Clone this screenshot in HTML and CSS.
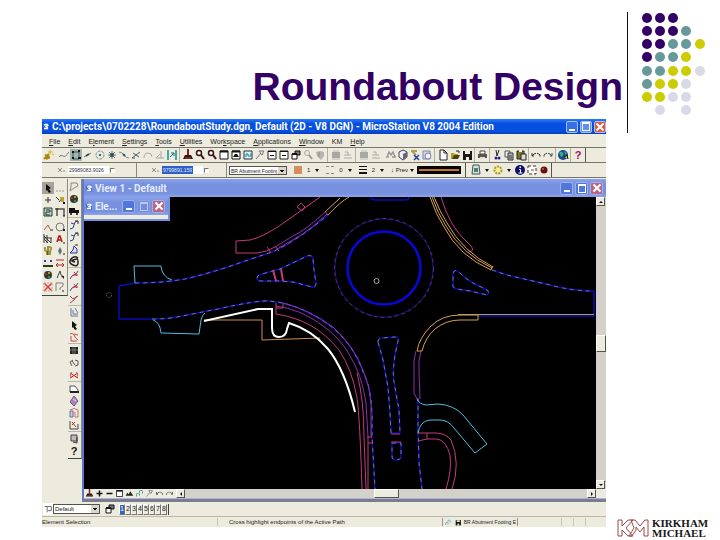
FILE: index.html
```
<!DOCTYPE html>
<html lang="en">
<head>
    <meta charset="UTF-8">
    <meta name="viewport" content="width=device-width, initial-scale=1.0">
    <title>Roundabout Design</title>
    <link rel="stylesheet" href="styles.css">
</head>
<body>
    <!-- Icon set -->
    <svg class="defs" aria-hidden="true">
        <symbol id="app" viewBox="0 0 12 12"><path d="M1 2h7l2 2v7H3z" fill="#3a66c8"/><path d="M3 4q4-3 6 0l-4 2q4 0 3 3H3" fill="none" stroke="#fff" stroke-width="2"/></symbol>
        <symbol id="key" viewBox="0 0 12 12"><path d="M1 10l5-5M3 10l4-2M2 6l4 1" stroke="#a98a10" stroke-width="2"/><path d="M7 1v5M5 3h5M9 5l2 1" stroke="#d6b820"/></symbol>
        <symbol id="wave" viewBox="0 0 12 12"><path d="M1 8q2-3 4-1t6-4" fill="none" stroke="#6c7f8c"/></symbol>
        <symbol id="grid" viewBox="0 0 12 12"><path d="M0 0h12v12H0z" fill="#a9b3ad"/><path d="M3 3h6v7H3z" fill="none" stroke="#286466"/><path d="M2 3h2M8 9h3M2 9h2M8 2h2" stroke="#111" stroke-width="2"/></symbol>
        <symbol id="slant" viewBox="0 0 12 12"><path d="M2 8l7-4" stroke="#6f7e88"/><path d="M4 7l3-2" stroke="#344f5c" stroke-width="2"/></symbol>
        <symbol id="target" viewBox="0 0 12 12"><circle cx="6" cy="6" r="4" fill="none" stroke="#7c8d94" stroke-dasharray="3 1"/><path d="M5 5h2v2H5z" fill="#356a78"/></symbol>
        <symbol id="mesh" viewBox="0 0 12 12"><path d="M3 3l6 6M9 3L3 9M6 2v8M2 6h8" stroke="#5b7076"/><circle cx="6" cy="6" r="2" fill="#3b5358"/></symbol>
        <symbol id="fall" viewBox="0 0 12 12"><path d="M1 3q3 0 5 3t5 3" fill="none" stroke="#75858c"/><path d="M5 5l2 2" stroke="#2f555f" stroke-width="2"/></symbol>
        <symbol id="cross" viewBox="0 0 12 12"><path d="M2 9l8-6M3 4l6 4M2 9h3" stroke="#4a5d64"/></symbol>
        <symbol id="arc" viewBox="0 0 12 12"><path d="M2 9q0-5 4-5t4 4" fill="none" stroke="#a3aaa6"/></symbol>
        <symbol id="perp" viewBox="0 0 12 12"><path d="M2 9h8M7 2v7M2 9l4-4" stroke="#a3aaa6"/></symbol>
        <symbol id="snap" viewBox="0 0 12 12"><path d="M3 2H2v8h1M9 2h1v8H9" fill="none" stroke="#3fa9a2" stroke-width="2"/><path d="M4 8l4-4M5 4h3v3" fill="none" stroke="#1c6b78"/></symbol>
        <symbol id="brush" viewBox="0 0 12 12"><path d="M6 0v6" stroke="#8a1d1d" stroke-width="2"/><path d="M3 6h6l2 4H1z" fill="#241818"/><path d="M3 9h6" stroke="#c33"/></symbol>
        <symbol id="zoomin" viewBox="0 0 12 12"><circle cx="5" cy="4" r="2.500" fill="#fff" stroke="#3b1313" stroke-width="1.500"/><path d="M7 6l3 4" stroke="#3b1010" stroke-width="2"/></symbol>
        <symbol id="zoomgray" viewBox="0 0 12 12"><circle cx="5" cy="4" r="2.500" fill="none" stroke="#aaa"/><path d="M7 6l3 4" stroke="#999" stroke-width="2"/></symbol>
        <symbol id="win" viewBox="0 0 12 12"><path d="M2 2h8v8H2z" fill="#fff" stroke="#111"/><path d="M2 2.500h8" stroke="#111" stroke-width="2"/></symbol>
        <symbol id="winfit" viewBox="0 0 12 12"><path d="M2 2h8v8H2z" fill="#fff" stroke="#111"/><path d="M2 2.500h8" stroke="#111" stroke-width="2"/><path d="M3 8l2-3h2l2 3z" fill="#111"/></symbol>
        <symbol id="winblue" viewBox="0 0 12 12"><path d="M2 2h8v8H2z" fill="#dff0f2" stroke="#234"/><path d="M4 8V5h2v2h3V4" fill="none" stroke="#20828c"/></symbol>
        <symbol id="wrench" viewBox="0 0 12 12"><path d="M2 10l5-6M5 2h5L8 6z" fill="#eee" stroke="#777"/></symbol>
        <symbol id="winarrow" viewBox="0 0 12 12"><path d="M2 2h8v8H2z" fill="#fff" stroke="#222"/><path d="M2 2.500h8M4 6.500h4" stroke="#111"/></symbol>
        <symbol id="copywin" viewBox="0 0 12 12"><path d="M5 2h5v4H5z" fill="#777" stroke="#111"/><path d="M2 5h5v5H2z" fill="#fff" stroke="#111"/><path d="M2 5h5" stroke="#111" stroke-width="2"/></symbol>
        <symbol id="shield" viewBox="0 0 12 12"><path d="M2 3l4-1 4 1v4l-3 4-4-4z" fill="#b5b5ae"/><path d="M5 3v5" stroke="#8c8c88"/></symbol>
        <symbol id="stamp" viewBox="0 0 12 12"><path d="M2 3h8v6H2z" fill="#a9a9a4"/><path d="M2 10h8M3 2h6" stroke="#bbb"/></symbol>
        <symbol id="lines" viewBox="0 0 12 12"><path d="M3 3h3v3M2 6h7M2 9h8" fill="none" stroke="#aaa"/></symbol>
        <symbol id="bino" viewBox="0 0 12 12"><path d="M2 8l2-5 2 3 2-3 2 5M1 8h3M7 8h4" fill="none" stroke="#999" stroke-width="1.500"/></symbol>
        <symbol id="cube" viewBox="0 0 12 12"><path d="M6 1l4 2v5l-4 3-4-3V3z" fill="#eef" stroke="#444"/><path d="M6 5l4-2v5l-4 3z" fill="#667"/></symbol>
        <symbol id="flag" viewBox="0 0 12 12"><path d="M2 2h6M3 2l4 4" stroke="#b59a52" stroke-width="2"/><path d="M5 6l5 5M10 6l-5 5" stroke="#2238b8" stroke-width="1.500"/></symbol>
        <symbol id="note" viewBox="0 0 12 12"><path d="M2 2h7v8H2z" fill="#cfd4e8" stroke="#8088b0"/><circle cx="7" cy="7" r="3" fill="#f2f2fa" stroke="#7780a8"/></symbol>
        <symbol id="page" viewBox="0 0 12 12"><path d="M3 1h4l3 3v7H3z" fill="#fff" stroke="#222"/><path d="M7 1v3h3" stroke="#222" fill="none"/></symbol>
        <symbol id="open" viewBox="0 0 12 12"><path d="M2 4h3l1 1h3v5H2z" fill="#b5a31c"/><path d="M3 10l2-4h6l-2 4z" fill="#45410d"/><path d="M7 2h3v2" stroke="#222" fill="none"/></symbol>
        <symbol id="save" viewBox="0 0 12 12"><path d="M2 2h9v9H2z" fill="#191919"/><path d="M4 2h5v3H4zM5 8h3v3H5z" fill="#ecebdd"/></symbol>
        <symbol id="print" viewBox="0 0 12 12"><path d="M4 2h5v3H4z" fill="#fff" stroke="#444"/><path d="M2 5h9v4H2z" fill="#56564e"/><path d="M4 8h5v2H4z" fill="#ddd"/></symbol>
        <symbol id="cut" viewBox="0 0 12 12"><path d="M5 1l1 6M8 1L6 7" stroke="#222"/><circle cx="5" cy="9" r="1.500" fill="#23239a"/><circle cx="8" cy="9" r="1.500" fill="#23239a"/></symbol>
        <symbol id="copy" viewBox="0 0 12 12"><path d="M2 2h5v6H2z" fill="#eee" stroke="#555"/><path d="M5 4h5v7H5z" fill="#bbb" stroke="#333"/><path d="M6 7h3M6 9h3" stroke="#333"/></symbol>
        <symbol id="paste" viewBox="0 0 12 12"><path d="M2 2h7v8H2z" fill="#7c7520" stroke="#222"/><path d="M6 5h5v6H6z" fill="#ddd" stroke="#222"/><path d="M4 1h3v2H4z" fill="#eee"/></symbol>
        <symbol id="undo" viewBox="0 0 12 12"><path d="M2 4v3h3M2 7q4-5 8-1v2" fill="none" stroke="#333" stroke-dasharray="5 1"/></symbol>
        <symbol id="redo" viewBox="0 0 12 12"><path d="M10 4v3H7M10 7q-4-5-8-1v2" fill="none" stroke="#444" stroke-dasharray="5 1"/></symbol>
        <symbol id="globe" viewBox="0 0 12 12"><circle cx="6" cy="6" r="5" fill="#154a8e"/><path d="M2 4q3-3 4 0t-2 4zM7 2l3 2-2 2z" fill="#3fa48c"/><path d="M7 8l3-2 1 4" fill="#c9a72c" stroke="#111"/></symbol>
        <symbol id="info" viewBox="0 0 12 12"><circle cx="6" cy="6" r="5" fill="#101070"/><path d="M5 5.500h1.500V9M4.500 9h4" stroke="#fff" fill="none"/><path d="M5.500 2.500h1.500v1.500H5.500z" fill="#fff"/></symbol>
        <symbol id="cells" viewBox="0 0 12 12"><path d="M2 2h8v8H2z" fill="#fff" stroke="#333" stroke-dasharray="3 2"/><path d="M5 6h3" stroke="#a33"/></symbol>
        <symbol id="ball" viewBox="0 0 12 12"><circle cx="6" cy="6" r="3.500" fill="#641212"/><circle cx="5" cy="5" r="1" fill="#c06060"/></symbol>
        <symbol id="layers" viewBox="0 0 12 12"><path d="M3 1h6l1 9H2z" fill="#d7e2d8" stroke="#455"/><path d="M4 4h4v4H4z" fill="#4d8078"/></symbol>
        <symbol id="gear" viewBox="0 0 12 12"><circle cx="6" cy="6" r="3.500" fill="#f5ee9c" stroke="#a89b22" stroke-width="2" stroke-dasharray="2 1"/></symbol>
        <symbol id="axis" viewBox="0 0 12 12"><path d="M3 4l4 4M7 4L3 8M8 7h2" stroke="#888"/></symbol>
        <symbol id="arrow" viewBox="0 0 12 12"><path d="M4 2l5 4-2 1 2 3-2 1-2-3-1 1z" fill="#111"/></symbol>
        <symbol id="fence" viewBox="0 0 12 12"><path d="M2 9h8" stroke="#999" stroke-dasharray="2 1"/></symbol>
        <symbol id="plus" viewBox="0 0 12 12"><path d="M6 3v6M3 6h6" stroke="#333"/></symbol>
        <symbol id="plusbold" viewBox="0 0 12 12"><path d="M6 2v8M2 6h8" stroke="#111" stroke-width="2"/></symbol>
        <symbol id="minus" viewBox="0 0 12 12"><path d="M2 6h8" stroke="#111" stroke-width="2"/></symbol>
        <symbol id="pen" viewBox="0 0 12 12"><path d="M2 3l3 3M5 8l4-5" stroke="#333"/><path d="M6 3h4v5H7z" fill="#b8a334"/><path d="M9 9h2" stroke="#111" stroke-width="2"/></symbol>
        <symbol id="hatch" viewBox="0 0 12 12"><path d="M2 2h8v8H2z" fill="#bfd0c5" stroke="#213f38"/><path d="M4 4h4v2H4v3h4" fill="none" stroke="#213f38"/></symbol>
        <symbol id="shape" viewBox="0 0 12 12"><path d="M3 10V3h7v7" fill="none" stroke="#57504c" stroke-width="1.500"/><path d="M1 3h3M9 10h2" stroke="#111"/></symbol>
        <symbol id="redline" viewBox="0 0 12 12"><path d="M2 9l4-5 2 4" fill="none" stroke="#ad5555"/><path d="M8 9h3" stroke="#222"/></symbol>
        <symbol id="ellipse" viewBox="0 0 12 12"><circle cx="6" cy="6" r="4" fill="none" stroke="#777"/><path d="M9 9h2" stroke="#222" stroke-width="2"/></symbol>
        <symbol id="pattern" viewBox="0 0 12 12"><path d="M2 1v9M2 3l7 7M2 6l4 4M5 2v8M2 5h8M9 5v5" stroke="#3b3b3b"/></symbol>
        <symbol id="text" viewBox="0 0 12 12"><path d="M3 9l2-6h1l2 6M4 7h3" fill="none" stroke="#b01818" stroke-width="1.500"/><path d="M9 10h2" stroke="#222"/></symbol>
        <symbol id="tags" viewBox="0 0 12 12"><path d="M3 2v3l2 2v3M7 2q4 0 1 4v4" fill="none" stroke="#a89a24" stroke-width="2"/><path d="M6 1v9" stroke="#222"/></symbol>
        <symbol id="move" viewBox="0 0 12 12"><path d="M6 2l2 4-2 4-2-4z" fill="#65727e"/><path d="M9 9h2" stroke="#222"/></symbol>
        <symbol id="measure" viewBox="0 0 12 12"><path d="M2 4h2M8 4h2" stroke="#2c3bb4" stroke-width="2"/><path d="M1 9h10" stroke="#2b3c1d" stroke-width="2"/></symbol>
        <symbol id="dim" viewBox="0 0 12 12"><path d="M2 3h8M2 8h8M4 6L2 8l2 2M8 6l2 2-2 2" fill="none" stroke="#a82c2c"/></symbol>
        <symbol id="palette" viewBox="0 0 12 12"><circle cx="6" cy="6" r="4" fill="#333b28"/><circle cx="4" cy="5" r="1" fill="#cb2828"/><circle cx="7" cy="4" r="1" fill="#d8b635"/><circle cx="7" cy="8" r="1" fill="#2c9dbb"/></symbol>
        <symbol id="modify" viewBox="0 0 12 12"><path d="M3 9l3-7 1 4 3 2" fill="none" stroke="#444"/><path d="M7 7h3v3z" fill="#222"/></symbol>
        <symbol id="delete" viewBox="0 0 12 12"><path d="M2 2l8 8M10 2l-8 8" stroke="#d63d3d" stroke-width="1.500"/><path d="M2 2h8v8H2z" fill="none" stroke="#dc9b90" stroke-dasharray="2 1"/></symbol>
        <symbol id="help2" viewBox="0 0 12 12"><path d="M2 10V2h7v3l-3 2v2" fill="none" stroke="#8b7e7e"/><path d="M8 10h2" stroke="#222"/></symbol>
        <symbol id="truck" viewBox="0 0 12 12"><path d="M1 3h6v5H1zM7 5h4v3H7z" fill="#111"/><circle cx="3" cy="9" r="1"/><circle cx="9" cy="9" r="1"/></symbol>
        <symbol id="lamp" viewBox="0 0 12 12"><path d="M3 2h6l1 3-4 2-4 3 1-4z" fill="none" stroke="#888"/></symbol>
        <symbol id="curve" viewBox="0 0 12 12"><path d="M2 10q4 0 4-4t4-4M3 4l3 1" fill="none" stroke="#344093"/><path d="M7 2h3v3" stroke="#333" fill="none"/></symbol>
        <symbol id="curve2" viewBox="0 0 12 12"><path d="M2 10h7V6L6 3 5 7z" fill="#dde" stroke="#2a36a0"/><path d="M7 2h3" stroke="#222"/></symbol>
        <symbol id="spiral" viewBox="0 0 12 12"><path d="M10 3Q6 0 3 4t2 6 5-2-1-4-4 1 2 2" fill="none" stroke="#222" stroke-width="1.500"/></symbol>
        <symbol id="redcurve" viewBox="0 0 12 12"><path d="M2 10q2-4 4-4t4-4" fill="none" stroke="#3a41a4"/><path d="M6 3l3 4M5 6h5" stroke="#c53535"/></symbol>
        <symbol id="vee" viewBox="0 0 12 12"><path d="M2 3l3 3 5-3M2 10l4-3 3-4" fill="none" stroke="#a93e5e"/></symbol>
        <symbol id="stack" viewBox="0 0 12 12"><path d="M3 1v8h7M5 3v4h5M7 1l3 5" fill="none" stroke="#6975ab"/></symbol>
        <symbol id="redfence" viewBox="0 0 12 12"><path d="M2 3q3-2 4 1t4 5M3 5v5h6M6 3l4 1" fill="none" stroke="#c94a4a"/></symbol>
        <symbol id="block" viewBox="0 0 12 12"><path d="M2 2h8v7H2z" fill="#222"/><path d="M2 5h8M5 2v8M7 2v8" stroke="#bbb" stroke-width=".5"/></symbol>
        <symbol id="loops" viewBox="0 0 12 12"><path d="M5 3L2 5l2 4M7 3l3 1v4l-3 1M4 4l3 4" fill="none" stroke="#555"/></symbol>
        <symbol id="redloops" viewBox="0 0 12 12"><path d="M2 4l8 5M10 4L2 9" stroke="#c22"/><path d="M4 3L2 6l2 3M8 3l2 3-2 3" fill="none" stroke="#b66"/></symbol>
        <symbol id="cloud" viewBox="0 0 12 12"><path d="M2 9V3h5l3 4v2z" fill="#fff" stroke="#555"/><path d="M2 9h9" stroke="#222" stroke-width="2"/></symbol>
        <symbol id="gem" viewBox="0 0 12 12"><path d="M6 1l4 5-4 5-4-4z" fill="#aa82bb" stroke="#725b88"/><path d="M5 4l3 2" stroke="#eedff2"/></symbol>
        <symbol id="door" viewBox="0 0 12 12"><path d="M2 3q4-3 8 0v7H7V5" fill="none" stroke="#d46b6b"/><path d="M2 4h3v6H2z" fill="#ccd" stroke="#656da0"/></symbol>
        <symbol id="chart" viewBox="0 0 12 12"><path d="M2 2v8h8V5" fill="none" stroke="#444"/><path d="M4 3l4 5M4 6l3-3" stroke="#c33"/></symbol>
        <symbol id="book" viewBox="0 0 12 12"><path d="M3 2h6v6H3z" fill="#bbb" stroke="#444"/><path d="M5 9l4 1V4" stroke="#333" fill="none"/></symbol>
        <symbol id="hills" viewBox="0 0 12 12"><path d="M1 9l2-4 2 2 2-4 2 3 2 3z" fill="#222"/></symbol>
        <symbol id="teal" viewBox="0 0 12 12"><path d="M2 10V6h4v4M6 5V2h4v4" fill="none" stroke="#178d90" stroke-dasharray="3 1"/></symbol>
        <symbol id="folder" viewBox="0 0 12 12"><path d="M2 3h3v7M5 3h5v5H6" fill="#fff" stroke="#555"/></symbol>
    </svg>

    <div class="slide">
        <main>
            <h1>Roundabout Design</h1>

            <section class="app">
                <div class="titlebar">
                    <svg class="logo-ico"><use href="#app"/></svg>
                    <span class="caption">C:\projects\0702228\RoundaboutStudy.dgn, Default (2D - V8 DGN) - MicroStation V8 2004 Edition</span>
                    <button class="wbtn min" aria-label="Minimize"></button>
                    <button class="wbtn restore" aria-label="Restore"></button>
                    <button class="wbtn close" aria-label="Close"></button>
                </div>

                <nav class="menu">
                    <a href="#"><u>F</u>ile</a>
                    <a href="#"><u>E</u>dit</a>
                    <a href="#">E<u>l</u>ement</a>
                    <a href="#"><u>S</u>ettings</a>
                    <a href="#"><u>T</u>ools</a>
                    <a href="#"><u>U</u>tilities</a>
                    <a href="#">Wor<u>k</u>space</a>
                    <a href="#"><u>A</u>pplications</a>
                    <a href="#"><u>W</u>indow</a>
                    <a href="#">KM</a>
                    <a href="#"><u>H</u>elp</a>
                </nav>

                <div class="toolbar">
                    <div class="group first">
                        <button aria-label="Key-in"><svg><use href="#key"/></svg></button>
                    </div>
                    <div class="group">
                        <button aria-label="Smart line"><svg><use href="#wave"/></svg></button>
                        <button aria-label="Grid snap"><svg><use href="#grid"/></svg></button>
                        <button aria-label="Midpoint"><svg><use href="#slant"/></svg></button>
                        <button aria-label="Center"><svg><use href="#target"/></svg></button>
                        <button aria-label="Origin"><svg><use href="#mesh"/></svg></button>
                        <button aria-label="Bisector"><svg><use href="#fall"/></svg></button>
                        <button aria-label="Intersection"><svg><use href="#cross"/></svg></button>
                        <button aria-label="Tangent"><svg><use href="#arc"/></svg></button>
                        <button aria-label="Perpendicular"><svg><use href="#perp"/></svg></button>
                        <button aria-label="Multi-snap"><svg><use href="#snap"/></svg></button>
                    </div>
                    <div class="group">
                        <button aria-label="Update view"><svg><use href="#brush"/></svg></button>
                        <button aria-label="Zoom in"><svg><use href="#zoomin"/></svg></button>
                        <button aria-label="Zoom out"><svg><use href="#zoomin"/></svg></button>
                        <button aria-label="Window area"><svg><use href="#win"/></svg></button>
                        <button aria-label="Fit view"><svg><use href="#winfit"/></svg></button>
                        <button aria-label="Rotate view"><svg><use href="#winblue"/></svg></button>
                        <button aria-label="Pan"><svg><use href="#wrench"/></svg></button>
                        <button aria-label="View previous"><svg><use href="#winarrow"/></svg></button>
                        <button aria-label="View next"><svg><use href="#winarrow"/></svg></button>
                        <button aria-label="Copy view"><svg><use href="#copywin"/></svg></button>
                        <button aria-label="Find"><svg><use href="#zoomgray"/></svg></button>
                        <button aria-label="Protect"><svg><use href="#shield"/></svg></button>
                    </div>
                    <div class="group">
                        <button aria-label="Stamp"><svg><use href="#stamp"/></svg></button>
                        <button aria-label="Levels"><svg><use href="#lines"/></svg></button>
                    </div>
                    <div class="group open">
                        <button aria-label="Raster"><svg><use href="#stamp"/></svg></button>
                        <button aria-label="Reference"><svg><use href="#lines"/></svg></button>
                    </div>
                    <div class="group">
                        <button aria-label="Search"><svg><use href="#bino"/></svg></button>
                        <button aria-label="Model"><svg><use href="#cube"/></svg></button>
                        <button aria-label="Markup"><svg><use href="#flag"/></svg></button>
                        <button aria-label="Notes"><svg><use href="#note"/></svg></button>
                    </div>
                    <div class="group">
                        <button aria-label="New"><svg><use href="#page"/></svg></button>
                        <button aria-label="Open"><svg><use href="#open"/></svg></button>
                        <button aria-label="Save"><svg><use href="#save"/></svg></button>
                    </div>
                    <div class="group tight">
                        <button aria-label="Print"><svg><use href="#print"/></svg></button>
                    </div>
                    <div class="group tight">
                        <button aria-label="Cut"><svg><use href="#cut"/></svg></button>
                        <button aria-label="Copy"><svg><use href="#copy"/></svg></button>
                        <button aria-label="Paste"><svg><use href="#paste"/></svg></button>
                    </div>
                    <div class="group tight">
                        <button aria-label="Undo"><svg><use href="#undo"/></svg></button>
                        <button aria-label="Redo"><svg><use href="#redo"/></svg></button>
                    </div>
                    <div class="group tight">
                        <button aria-label="Web"><svg><use href="#globe"/></svg></button>
                    </div>
                    <div class="group tight last">
                        <button class="ask" aria-label="Help">?</button>
                    </div>
                </div>

                <div class="toolbar attributes">
                    <div class="coord x">
                        <label for="coord-x"><svg><use href="#axis"/></svg></label>
                        <input id="coord-x" type="text" value="29989083.9026">
                        <input type="checkbox" aria-label="Lock X">
                    </div>
                    <div class="coord y">
                        <label for="coord-y"><svg><use href="#axis"/></svg></label>
                        <input id="coord-y" class="selected" type="text" value="9799891.1592">
                        <input type="checkbox" aria-label="Lock Y">
                    </div>
                    <div class="attrs">
                        <select class="level" aria-label="Level"><option>BR Abutment Footing</option></select>
                        <button class="pick" aria-label="Color"><i class="swatch"></i>1<b></b></button>
                        <button class="pick" aria-label="Line style"><i class="dashes"></i>0<b></b></button>
                        <button class="pick" aria-label="Line weight"><i class="weights"></i>2<b></b></button>
                        <button class="pick prev" aria-label="Preview">&#8595; Prev<b></b></button>
                        <span class="preview"></span>
                    </div>
                    <div class="extras">
                        <button aria-label="Level manager"><svg><use href="#layers"/></svg></button><b></b>
                        <button aria-label="Settings"><svg><use href="#gear"/></svg></button><b></b>
                        <button aria-label="Information"><svg><use href="#info"/></svg></button>
                        <button aria-label="Cells"><svg><use href="#cells"/></svg></button>
                        <button aria-label="Record"><svg><use href="#ball"/></svg></button>
                    </div>
                </div>

                <div class="workspace">
                    <div class="palette main-tools">
                        <div class="set">
                            <button class="on" aria-label="Element selection"><svg><use href="#arrow"/></svg></button>
                            <button aria-label="Fence"><svg><use href="#fence"/></svg></button>
                            <button aria-label="Points"><svg><use href="#plus"/></svg></button>
                            <button aria-label="Linear elements"><svg><use href="#pen"/></svg></button>
                            <button aria-label="Patterns"><svg><use href="#hatch"/></svg></button>
                            <button aria-label="Polygons"><svg><use href="#shape"/></svg></button>
                        </div>
                        <div class="set">
                            <button aria-label="Arcs"><svg><use href="#redline"/></svg></button>
                            <button aria-label="Ellipses"><svg><use href="#ellipse"/></svg></button>
                            <button aria-label="Hatch area"><svg><use href="#pattern"/></svg></button>
                            <button aria-label="Text"><svg><use href="#text"/></svg></button>
                            <button aria-label="Tags"><svg><use href="#tags"/></svg></button>
                            <button aria-label="Groups"><svg><use href="#move"/></svg></button>
                            <button aria-label="Measure"><svg><use href="#measure"/></svg></button>
                            <button aria-label="Dimension"><svg><use href="#dim"/></svg></button>
                            <button aria-label="Change attributes"><svg><use href="#palette"/></svg></button>
                            <button aria-label="Modify"><svg><use href="#modify"/></svg></button>
                            <button aria-label="Delete"><svg><use href="#delete"/></svg></button>
                            <button aria-label="Query"><svg><use href="#help2"/></svg></button>
                        </div>
                    </div>

                    <div class="palette side-tools">
                        <div class="set">
                            <button aria-label="Light"><svg><use href="#lamp"/></svg></button>
                            <button aria-label="Colors"><svg><use href="#palette"/></svg></button>
                            <button aria-label="Vehicle"><svg><use href="#truck"/></svg></button>
                        </div>
                        <div class="set">
                            <button aria-label="Curve"><svg><use href="#curve"/></svg></button>
                            <button aria-label="Curve by points"><svg><use href="#curve"/></svg></button>
                            <button aria-label="Profile"><svg><use href="#curve2"/></svg></button>
                            <button aria-label="Spiral"><svg><use href="#spiral"/></svg></button>
                        </div>
                        <div class="set">
                            <button aria-label="Edit curve"><svg><use href="#redcurve"/></svg></button>
                            <button aria-label="Delete curve"><svg><use href="#redcurve"/></svg></button>
                            <button aria-label="Join curves"><svg><use href="#vee"/></svg></button>
                        </div>
                        <div class="set">
                            <button aria-label="Offsets"><svg><use href="#stack"/></svg></button>
                            <button aria-label="Select"><svg><use href="#arrow"/></svg></button>
                            <button aria-label="Clip"><svg><use href="#redfence"/></svg></button>
                        </div>
                        <div class="set">
                            <button aria-label="Block"><svg><use href="#block"/></svg></button>
                            <button aria-label="Link"><svg><use href="#loops"/></svg></button>
                            <button aria-label="Unlink"><svg><use href="#redloops"/></svg></button>
                        </div>
                        <div class="set">
                            <button aria-label="Surface"><svg><use href="#cloud"/></svg></button>
                            <button aria-label="Solid"><svg><use href="#gem"/></svg></button>
                            <button aria-label="Section"><svg><use href="#door"/></svg></button>
                            <button aria-label="Chart"><svg><use href="#chart"/></svg></button>
                        </div>
                        <div class="set">
                            <button aria-label="Manual"><svg><use href="#book"/></svg></button>
                            <button class="ask dark" aria-label="Help">?</button>
                        </div>
                    </div>

                    <div class="view">
                        <div class="titlebar pale">
                            <svg class="logo-ico"><use href="#app"/></svg>
                            <span class="caption">View 1 - Default</span>
                            <button class="wbtn min" aria-label="Minimize"></button>
                            <button class="wbtn max" aria-label="Maximize"></button>
                            <button class="wbtn close" aria-label="Close"></button>
                        </div>

                        <div class="view-body">
                            <div class="canvas">
                                <svg class="drawing" viewBox="84 197 512 292" preserveAspectRatio="xMidYMid meet" role="img" aria-label="Roundabout plan">
                                    <!-- road edges -->
                                    <g class="edge">
                                        <path d="M119 286L135 283Q162 283 185 279Q215 272 245 261L272 252Q297 241 328 215"/>
                                        <path d="M119 286V319"/>
                                        <path d="M119 319H152Q170 319 182 316L218 309Q258 300 270 301L283 303"/>
                                        <path d="M492 270L507 275L550 285Q573 291 594 291V316H478"/>
                                        <path d="M418 398V427L419 463L422 489"/>
                                        <path d="M283 303Q310 310 333 328Q354 346 363 372Q371 386 372 415V437L375 489"/>
                                        <path d="M371 197Q371 200 375 200H405Q409 200 409 197"/>
                                    </g>
                                    <g class="edge-dash">
                                        <path d="M135 283Q162 283 185 279Q215 272 245 261L272 252Q297 241 328 215"/>
                                        <path d="M152 319Q170 319 182 316L218 309Q258 300 270 301L283 303Q310 310 333 328Q354 346 363 372Q371 386 372 415V437L375 489"/>
                                        <path d="M492 270L507 275L550 285Q573 291 590 291"/>
                                        <path d="M418 398V427L419 463L422 489"/>
                                    </g>
                                    <path class="olive" d="M458 314.500H594"/>

                                    <!-- central island -->
                                    <circle class="ring" cx="384" cy="268" r="49"/>
                                    <circle class="ring-dash" cx="384" cy="268" r="49.500"/>
                                    <circle class="island" cx="384" cy="268" r="36.500"/>
                                    <circle class="pointer" cx="376.500" cy="281" r="2.500"/>
                                    <circle class="pointer faint" cx="109" cy="295" r="2.500"/>

                                    <!-- splitter islands -->
                                    <g class="edge">
                                        <path d="M257 278Q257 275 262 274L280 269L303 258Q311 253 313 258L314 270L316 283Q316 288 312 287L293 282L280 281H260Q257 281 257 278Z"/>
                                        <path d="M453 273Q455 268 460 273Q466 279 473 283L487 290Q490 292 487 295L470 291L457 289Q452 288 453 284Z"/>
                                        <path d="M378 342Q378 338 382 338L395 337Q399 337 398 341L396 350Q392 370 394 382L399 410L400 433H391L390 413L388 387L383 360Z"/>
                                        <path d="M392 443H401V457Q400 460 396 460Q392 460 392 456Z"/>
                                    </g>
                                    <g class="edge-dash">
                                        <path d="M257 278Q257 275 262 274L280 269L303 258Q311 253 313 258L314 270L316 283Q316 288 312 287L293 282L280 281H260Q257 281 257 278Z"/>
                                        <path d="M453 273Q455 268 460 273Q466 279 473 283L487 290Q490 292 487 295L470 291L457 289Q452 288 453 284Z"/>
                                        <path d="M378 342Q378 338 382 338L395 337Q399 337 398 341L396 350Q392 370 394 382L399 410L400 433M391 433L390 413L388 387L383 360L378 342"/>
                                        <path d="M392 443H401V457Q400 460 396 460Q392 460 392 456Z"/>
                                    </g>

                                    <!-- curbs -->
                                    <g class="purple">
                                        <path d="M325 212Q306 230 293 236L275 247M327 214Q310 230 296 238L277 249"/>
                                        <path d="M283 303Q310 310 333 327Q354 346 363 370Q370 386 371 403V437"/>
                                        <path d="M276 306Q300 309 322 325Q340 338 349 354Q362 375 366 403L368 437"/>
                                        <path d="M416 351Q413 360 414 372V393L417 399M421 351Q418 360 419 372L420 399"/>
                                    </g>
                                    <g class="pink">
                                        <path d="M320 197L292 217Q265 237 250 240L236 241V253H257Q267 252 275 247M267 247L271 253M275 246L279 251"/>
                                        <path d="M297 207L301 203L305 207L302 211Z"/>
                                        <path d="M276 303V314Q295 317 310 325Q326 334 339 350Q352 369 357 398Q360 420 362 489M283 303V308L276 308"/>
                                        <path d="M357 373Q364 400 364 437L366 489M368 437V489M367 437H372M368 443H373"/>
                                        <path d="M441 197Q449 224 463 238L471 246Q475 251 469 252"/>
                                        <path d="M391 434H400M391 442H401"/>
                                        <path d="M418 433H435Q446 433 451 440Q461 463 452 489M418 441L427 439H437Q446 440 450 455Q452 470 446 489M427 433V439"/>
                                        <path d="M325 211L328 215"/>
                                    </g>
                                    <path class="pink thick" d="M273 270L276 281M281 269L283 281"/>
                                    <g class="gold">
                                        <path d="M325 212L340 198M328 215Q340 202 349 197"/>
                                        <path d="M430 197Q436 215 444 227Q459 256 491 270M434 197Q440 212 447 223Q463 252 493 267M432 197Q438 214 446 226Q462 254 492 268M491 270L493 266"/>
                                        <path d="M478 315H460Q442 315 431 326Q419 338 417 351H422Q425 338 435 329Q446 320 460 320H478V315"/>
                                    </g>

                                    <!-- driveways -->
                                    <g class="cyan">
                                        <path d="M135 283L134 266H161Q162 277 172 280"/>
                                        <path d="M153 320Q160 322 161 333L199 334L201 320Q202 315 205 313"/>
                                        <path d="M417 399Q419 404 426 405L438 404Q454 405 463 415L487 444L475 453L454 428Q448 420 440 420H430Q420 421 418 433"/>
                                    </g>
                                    <path class="orange" d="M204 320H262V340L320 338"/>
                                    <path class="path" d="M204 321L258 309H272V328Q272 337 279 337Q286 337 287 329L289 323Q312 330 328 349Q345 370 355 412"/>
                                </svg>

                                <div class="dialog">
                                    <div class="titlebar pale">
                                        <svg class="logo-ico"><use href="#app"/></svg>
                                        <span class="caption">Ele...</span>
                                        <button class="wbtn min" aria-label="Minimize"></button>
                                        <button class="wbtn max dim" aria-label="Maximize"></button>
                                        <button class="wbtn close" aria-label="Close"></button>
                                    </div>
                                    <div class="dialog-body"></div>
                                </div>
                            </div>
                            <div class="scroll vertical">
                                <button class="up" aria-label="Scroll up"></button>
                                <span class="thumb"></span>
                                <button class="down" aria-label="Scroll down"></button>
                            </div>
                        </div>

                        <div class="view-bar">
                            <div class="view-tools">
                                <button aria-label="Update"><svg><use href="#brush"/></svg></button>
                                <button aria-label="Zoom in"><svg><use href="#plusbold"/></svg></button>
                                <button aria-label="Zoom out"><svg><use href="#minus"/></svg></button>
                                <button aria-label="Window area"><svg><use href="#win"/></svg></button>
                                <button aria-label="Fit"><svg><use href="#hills"/></svg></button>
                                <button aria-label="Rotate"><svg><use href="#teal"/></svg></button>
                                <button aria-label="Pan"><svg><use href="#wrench"/></svg></button>
                                <button aria-label="Previous"><svg><use href="#undo"/></svg></button>
                                <button aria-label="Next"><svg><use href="#redo"/></svg></button>
                            </div>
                            <div class="scroll horizontal">
                                <button class="left" aria-label="Scroll left"></button>
                                <span class="thumb"></span>
                                <button class="right" aria-label="Scroll right"></button>
                            </div>
                        </div>
                    </div>
                </div>

                <div class="views-row">
                    <svg class="folder"><use href="#folder"/></svg>
                    <select class="group-select" aria-label="View group"><option>Default</option></select>
                    <button class="manage" aria-label="Manage view groups"><svg><use href="#copywin"/></svg></button>
                    <div class="numbers">
                        <button class="on">1</button><button>2</button><button>3</button><button>4</button><button>5</button><button>6</button><button>7</button><button>8</button>
                    </div>
                </div>

                <div class="status">
                    <span class="tool">Element Selection</span>
                    <span class="prompt">Cross highlight endpoints of the Active Path</span>
                    <span class="level-name"><svg><use href="#teal"/></svg><svg><use href="#save"/></svg>BR Abutment Footing E</span>
                    <span class="cell wide"></span>
                    <span class="cell"></span>
                    <span class="cell"></span>
                    <span class="cell end"></span>
                </div>
            </section>
        </main>

        <aside>
            <div class="marks">
                <svg viewBox="0 0 64 104" aria-hidden="true">
                    <g fill="#330066">
                        <circle cx="6" cy="6" r="5"/><circle cx="19" cy="6" r="5"/><circle cx="32" cy="6" r="5"/>
                        <circle cx="6" cy="19" r="5"/><circle cx="19" cy="19" r="5"/><circle cx="32" cy="19" r="5"/>
                        <circle cx="6" cy="32" r="5"/><circle cx="19" cy="32" r="5"/>
                        <circle cx="6" cy="45" r="5"/>
                    </g>
                    <g fill="#669999">
                        <circle cx="45" cy="19" r="5"/>
                        <circle cx="32" cy="32" r="5"/><circle cx="45" cy="32" r="5"/>
                        <circle cx="19" cy="45" r="5"/><circle cx="32" cy="45" r="5"/>
                        <circle cx="6" cy="59" r="5"/><circle cx="19" cy="59" r="5"/>
                        <circle cx="6" cy="72" r="5"/>
                    </g>
                    <g fill="#cccc00">
                        <circle cx="59" cy="32" r="5"/>
                        <circle cx="45" cy="45" r="5"/>
                        <circle cx="32" cy="59" r="5"/><circle cx="45" cy="59" r="5"/>
                        <circle cx="19" cy="72" r="5"/><circle cx="32" cy="72" r="5"/>
                        <circle cx="6" cy="85" r="5"/><circle cx="19" cy="85" r="5"/>
                    </g>
                    <g fill="#d9d9e8">
                        <circle cx="59" cy="59" r="5"/>
                        <circle cx="45" cy="72" r="5"/>
                        <circle cx="32" cy="85" r="5"/><circle cx="45" cy="85" r="5"/>
                        <circle cx="19" cy="98" r="5"/><circle cx="45" cy="98" r="5"/>
                    </g>
                </svg>
            </div>

            <div class="brand">
                <svg viewBox="0 0 32 18" aria-hidden="true">
                    <path d="M1 1h4v6l6-6h5l-7 8 7 8h-5L5 11v6H1zM14 1h4l5 6 5-6h3v16h-4V8l-4 5-4-5v3l-4 6h-3l5-8z"/>
                </svg>
                <span>KIRKHAM<br>MICHAEL</span>
            </div>
        </aside>
    </div>
</body>
</html>
```

FILE: styles.css
```
* {
    box-sizing: border-box;
}
body {
    margin: 0;
    background-color: #fff;
    color: #222;
    font-family: "Liberation Sans", Arial, sans-serif;
}
button {
    display: flex;
    align-items: center;
    justify-content: center;
    flex: none;
    padding: 0;
    border: none;
    background: none;
    color: inherit;
    font: inherit;
}
svg {
    display: block;
    flex: none;
    width: 12px;
    height: 12px;
}
.defs {
    display: none;
}
.slide {
    display: grid;
    grid-template-columns: minmax(0, 1fr) 93px;
    min-height: 100vh;
}
h1 {
    margin: 0;
    padding: 64px 4px 9px 0;
    color: #330066;
    font-size: 39px;
    line-height: 46px;
    text-align: right;
}

/* Slide decoration */
aside {
    display: flex;
    flex-direction: column;
    justify-content: space-between;
    padding: 12px 0 3px;
}
.marks {
    height: 121px;
    padding-left: 13px;
    border-left: 1px solid #111;
}
.marks svg {
    width: 64px;
    height: 104px;
}
.brand {
    display: flex;
    align-items: center;
    gap: 3px;
    margin-left: -10px;
    color: #181818;
    font: bold 11px/10px "Liberation Serif", serif;
}
.brand svg {
    width: 32px;
    height: 18px;
    fill: #fff;
    stroke: #9c4a4a;
}

/* Application window */
.app {
    margin: 0 21px 14px 42px;
    background-color: #ecebdd;
    font-size: 7px;
    line-height: 8px;
}
.titlebar {
    display: flex;
    align-items: center;
    gap: 2px;
    height: 15px;
    background: linear-gradient(#2a7af8, #0650e0 30%, #0650e0 80%, #0a3cb8);
    color: #fff;
    font: bold 10px/13px Roboto, sans-serif;
}
.titlebar .caption {
    flex: 1;
    min-width: 0;
    overflow: hidden;
    white-space: nowrap;
}
.logo-ico {
    width: 8px;
    height: 9px;
}
.wbtn {
    position: relative;
    width: 12px;
    height: 12px;
    border: 1px solid #a9c2f8;
    border-radius: 2px;
    background-color: #3a6ee8;
}
.wbtn::before {
    content: "";
    width: 6px;
    height: 6px;
}
.wbtn.min::before {
    border-bottom: 2px solid #fff;
}
.wbtn.restore::before,
.wbtn.max::before {
    border: 1px solid #fff;
    border-top-width: 2px;
}
.wbtn.restore {
    background-color: #5f8ff0;
}
.wbtn.close {
    background-color: #dc5836;
}
.wbtn.close::before,
.wbtn.close::after {
    content: "";
    position: absolute;
    width: 10px;
    height: 2px;
    background-color: #fff;
    transform: rotate(45deg);
}
.wbtn.close::after {
    transform: rotate(-45deg);
}
.titlebar.pale {
    height: 18px;
    padding: 0 3px 0 1px;
    background: linear-gradient(#8aa2ea, #7891df 30%, #7891df 80%, #8ba4e8);
    color: #e4ebff;
}
.pale .wbtn {
    width: 13px;
    height: 13px;
    border-color: #9bb0ee;
    background-color: #5078dc;
}
.pale .wbtn.dim {
    background-color: #6d88de;
    opacity: 0.5;
}
.pale .wbtn.close {
    background-color: #bb6680;
}
.menu {
    display: flex;
    gap: 8px;
    height: 14px;
    padding: 4px 7px 0;
    border-bottom: 1px solid #77766c;
}
.menu a {
    color: #222;
    text-decoration: none;
}

/* Toolbars */
.toolbar {
    display: flex;
    height: 15px;
    border-bottom: 1px solid #77766c;
}
.group {
    display: flex;
    align-items: center;
    padding: 0 1px 0 2px;
    border-right: 1px solid #b0afa3;
}
.group.first {
    padding-left: 1px;
    border-right: none;
}
.group.open {
    border-right: none;
}
.group.tight {
    padding-left: 1px;
}
.group.last {
    border-right-color: #55544c;
}
.ask {
    width: 12px;
    color: #a3106c;
    font: bold 11px/12px "Liberation Sans", sans-serif;
}
.ask.dark {
    color: #111;
}
.coord {
    display: flex;
    align-items: center;
    gap: 1px;
    border-right: 1px solid #8b8a80;
}
.coord.x {
    width: 95px;
    padding-left: 13px;
}
.coord.y {
    width: 90px;
    padding-left: 12px;
}
.coord input {
    margin: 0;
}
.coord input[type="text"] {
    width: 41px;
    height: 8px;
    padding: 0 1px;
    border: none;
    background-color: #fff;
    color: #333;
    font: 5px/8px "Liberation Sans", sans-serif;
}
.coord input.selected {
    border-right: 10px solid #fff;
    background-color: #2f5fc4;
    color: #dfe9ff;
}
.coord input[type="checkbox"] {
    appearance: none;
    width: 5px;
    height: 5px;
    border: 1px solid #77766c;
    border-right-color: #fff;
    border-bottom-color: #fff;
    background-color: #fff;
}
.attrs {
    display: flex;
    flex: none;
    align-items: center;
    gap: 7px;
    width: 239px;
    padding-left: 2px;
    border-right: 1px solid #55544c;
    font-size: 6px;
}
select {
    appearance: none;
    margin: 0;
    padding: 0 9px 0 1px;
    border: 1px solid #55544c;
    border-radius: 0;
    background-color: #fff;
    background-image: linear-gradient(#111, #111), linear-gradient(#111, #111), linear-gradient(#d8d7ca, #d8d7ca);
    background-position: right 2px top 3px, right 3px top 4px, right;
    background-size: 4px 1px, 2px 1px, 8px 100%;
    background-repeat: no-repeat;
    color: #222;
    font: 6px/8px "Liberation Sans", sans-serif;
}
.level {
    width: 58px;
    height: 9px;
    font-size: 5px;
}
.pick {
    gap: 5px;
}
.pick b,
.extras b {
    width: 0;
    height: 0;
    border: 2px solid transparent;
    border-top: 3px solid #111;
    border-bottom: none;
}
.pick i {
    width: 8px;
    height: 8px;
}
.swatch {
    background-color: #d38f5c;
}
.dashes {
    border-top: 1px dashed #888;
    border-bottom: 1px dashed #888;
}
.weights {
    border-top: 1px solid #111;
    background: linear-gradient(#111, #111) 0 2px / 8px 1px no-repeat;
    border-bottom: 2px solid #111;
}
.pick.prev {
    gap: 2px;
}
.preview {
    flex: 1;
    height: 8px;
    margin: 0 4px 0 -4px;
    border: solid #050505;
    border-width: 3px 2px;
    background-color: #bd772d;
}
.extras {
    display: flex;
    align-items: center;
    padding: 0 1px 0 4px;
    border-right: 1px solid #55544c;
}
.extras b {
    margin: 0 3px;
}

/* Tool palettes */
.workspace {
    display: flex;
    align-items: flex-start;
    padding-top: 1px;
}
.palette {
    border-right: 1px solid #8b8a80;
    border-bottom: 1px solid #44433c;
}
.set {
    display: grid;
    grid-template-columns: 12px;
    padding-top: 2px;
}
.main-tools {
    width: 26px;
    padding: 1px 0 2px;
}
.main-tools .set {
    grid-template-columns: 12px 12px;
}
.main-tools .set + .set {
    padding-top: 3px;
}
.main-tools .on {
    background-color: #a5a49a;
}
.side-tools {
    width: 14px;
    padding: 0 0 1px;
}
.side-tools .set + .set {
    padding-top: 1px;
    border-top: 1px solid #b9b8aa;
}

/* Drawing view */
.view {
    flex: 1;
    min-width: 0;
    border-left: 2px solid #6377c5;
    border-bottom: 3px solid #7b7c8c;
}
.view-body {
    display: flex;
}
.canvas {
    position: relative;
    flex: 1;
    min-width: 0;
    background-color: #000;
}
.drawing {
    width: 100%;
    height: auto;
    fill: none;
}
.edge {
    stroke: #0a0ab8;
    stroke-width: 1.5;
}
.edge-dash {
    stroke: #a8ac62;
    stroke-width: 0.7;
    stroke-dasharray: 4 4;
}
.ring {
    stroke: #10108e;
}
.ring-dash {
    stroke: #903a64;
    stroke-width: 0.7;
    stroke-dasharray: 4 3;
}
.island {
    stroke: #0808dc;
    stroke-width: 2.5;
}
.pointer {
    stroke: #aaa;
}
.pointer.faint {
    stroke: #4d5960;
    stroke-dasharray: 2 1;
}
.olive {
    stroke: #a4a45c;
}
.purple {
    stroke: #8a2fae;
}
.pink {
    stroke: #c23c7c;
}
.pink.thick {
    stroke-width: 2;
}
.gold {
    stroke: #d6a050;
}
.cyan {
    stroke: #50bce4;
}
.orange {
    stroke: #cf914c;
}
.path {
    stroke: #fff;
    stroke-width: 2;
}
.dialog {
    position: absolute;
    top: 0;
    left: 0;
    width: 86px;
    border: solid #7891df;
    border-width: 0 2px 2px 0;
}
.dialog-body {
    height: 4px;
    background-color: #ecebdd;
}
.scroll {
    display: flex;
    justify-content: space-between;
    background-color: #d3d1ca;
}
.scroll button,
.thumb {
    width: 9px;
    height: 9px;
    border: 1px solid #fff;
    border-right-color: #55544c;
    border-bottom-color: #55544c;
    background-color: #ecebdd;
}
.scroll button::before {
    content: "";
    border: 2px solid transparent;
}
.scroll .up::before {
    border-top: none;
    border-bottom-color: #111;
}
.scroll .down::before {
    border-bottom: none;
    border-top-color: #111;
}
.scroll .left::before {
    border-left: none;
    border-right-color: #111;
}
.scroll .right::before {
    border-right: none;
    border-left-color: #111;
}
.vertical {
    flex-direction: column;
    width: 10px;
}
.vertical .thumb {
    width: 10px;
    height: 17px;
}
.view-bar {
    display: flex;
    height: 10px;
    padding-right: 10px;
    border-bottom: 1px solid #a7b5e8;
}
.view-tools {
    display: flex;
    padding-right: 2px;
}
.view-tools button {
    width: 10px;
}
.view-tools svg {
    width: 9px;
    height: 9px;
}
.horizontal {
    flex: 1;
}
.horizontal .thumb {
    width: 25px;
}

/* Bottom bars */
.views-row {
    display: flex;
    align-items: center;
    height: 15px;
    padding-left: 1px;
    border-bottom: 1px solid #b9b8aa;
}
.folder {
    width: 10px;
    background-color: #fff;
}
.group-select {
    width: 47px;
    height: 10px;
}
.manage {
    margin: 0 3px 0 4px;
}
.numbers {
    display: flex;
    padding-right: 1px;
    border-right: 1px solid #44433c;
}
.numbers button {
    width: 6px;
    height: 11px;
    border: 1px solid #fff;
    border-right-color: #77766c;
    border-bottom-color: #77766c;
}
.numbers .on {
    background-color: #2f63c8;
    color: #fff;
}
.status {
    display: flex;
    align-items: center;
    height: 10px;
    font-size: 6px;
    white-space: nowrap;
}
.status .tool {
    width: 176px;
    border-right: 1px solid #c9c8ba;
}
.status .prompt {
    flex: 1;
    padding-left: 11px;
}
.level-name {
    display: flex;
    align-items: center;
    gap: 2px;
    padding: 0 1px;
    border-left: 1px solid #99988c;
    border-right: 1px solid #99988c;
    font-size: 5px;
}
.status svg {
    width: 8px;
    height: 7px;
}
.cell {
    width: 12px;
    height: 8px;
    border-right: 1px solid #c9c8ba;
}
.cell.wide {
    width: 44px;
}
.cell.end {
    width: 20px;
    border-right: none;
}
```
